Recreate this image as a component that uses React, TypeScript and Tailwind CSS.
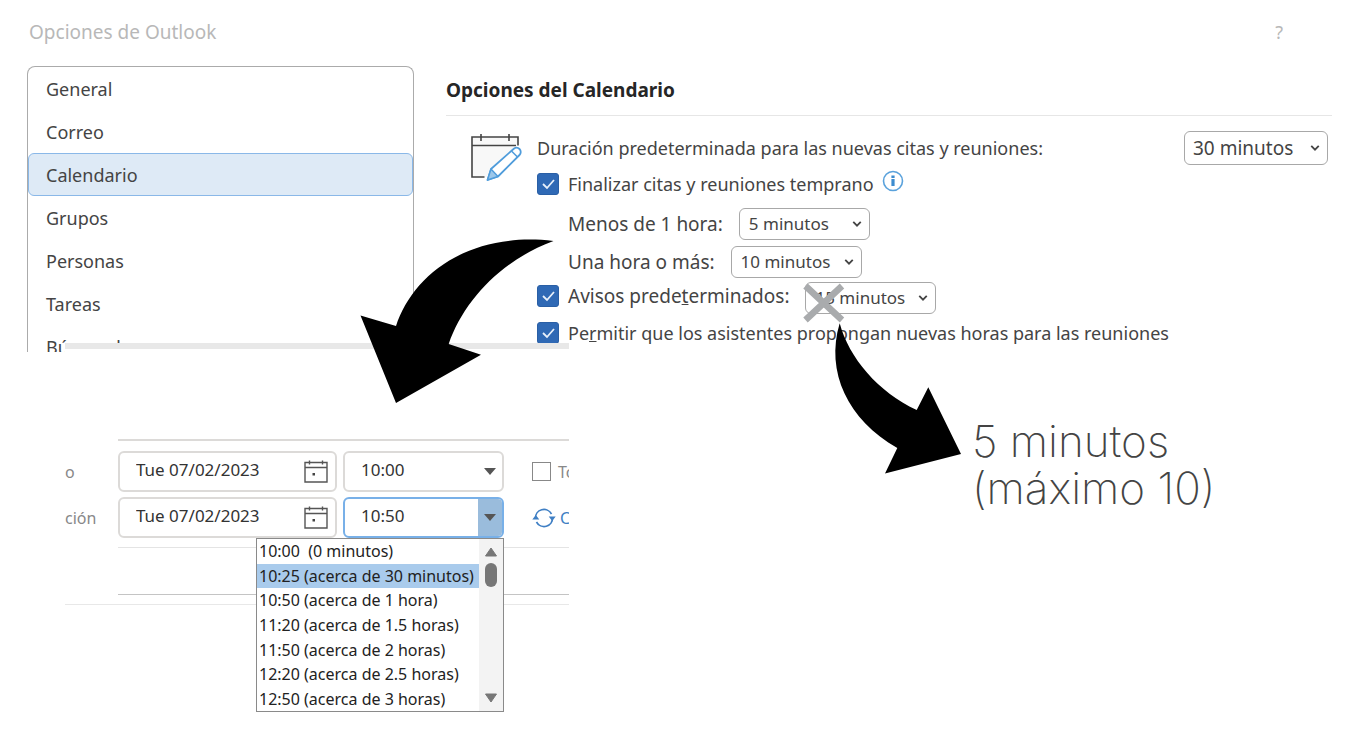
import { ReactNode, useState } from "react";
import clsx from "clsx";

const sections = ["General", "Correo", "Calendario", "Grupos", "Personas", "Tareas", "Búsqueda"];

const endTimes = [
    "10:00  (0 minutos)",
    "10:25 (acerca de 30 minutos)",
    "10:50 (acerca de 1 hora)",
    "11:20 (acerca de 1.5 horas)",
    "11:50 (acerca de 2 horas)",
    "12:20 (acerca de 2.5 horas)",
    "12:50 (acerca de 3 horas)",
];

const CalendarEditIcon = () => (
    <svg viewBox="0 0 52 50" className="w-[52px] h-[50px]" fill="none" aria-hidden="true">
        <path d="M16 44H2V4h46v9L22 38z" fill="#f8f8f8" />
        <path d="M14.500 44H2V4h46v8.500M2 12.500h44M11 1v7M39 1v7" stroke="#444" strokeWidth="1.600" />
        <path d="M17.500 47l3.500-11L43.500 16a4.200 4.200 0 0 1 6 6L28 43.500z" fill="#fff" stroke="#4f9cdb" strokeWidth="1.800" strokeLinejoin="round" />
        <path d="M17.500 47l3.500-11 7 7.500z" fill="#9cc7ea" stroke="#4f9cdb" strokeWidth="1.400" strokeLinejoin="round" />
        <path d="M41.500 18l6 6" stroke="#4f9cdb" strokeWidth="1.500" />
    </svg>
);

const DateIcon = () => (
    <svg viewBox="0 0 24 24" className="w-6 h-6" fill="none" stroke="#555" strokeWidth="1.400" aria-hidden="true">
        <path d="M1 2.500h22V22H1zM1 7.500h22M5.500 .5v4M18.500 .5v4" />
        <rect x="8.500" y="13" width="2.500" height="2.500" fill="#444" stroke="none" />
    </svg>
);

const InfoIcon = () => (
    <svg viewBox="0 0 22 22" className="w-[22px] h-[22px]" fill="none" aria-hidden="true">
        <circle cx="11" cy="11" r="9.500" stroke="#5aa2dc" strokeWidth="1.600" />
        <path d="M11 5.500v2.500M11 9v7" stroke="#3c8ccf" strokeWidth="3.200" />
    </svg>
);

const RecurrenceIcon = () => (
    <svg viewBox="0 0 24 20" className="w-6 h-5" fill="none" stroke="#3f7fc4" strokeWidth="1.700" aria-hidden="true">
        <path d="M3.500 10.500A8.500 8.500 0 0 1 19.500 6M20.500 9.500A8.500 8.500 0 0 1 4.500 14" />
        <path d="M.3 11.500h7l-3.500-4.500zM16.700 8.500h7L20.200 13z" fill="#3f7fc4" stroke="none" />
    </svg>
);

type OptionSelectProps = { id: string; label?: string; value: string; large?: boolean };

const OptionSelect = ({ id, label, value, large }: OptionSelectProps) => (
    <div className="relative shrink-0">
        <select
            id={id}
            aria-label={label}
            className={clsx(
                "block appearance-none rounded-md border border-[#a8a8a8] bg-white text-[#444]",
                large ? "h-[34px] w-36 pl-2 text-[19px] leading-6" : "h-8 w-[131px] pl-[9px] text-[17px] leading-6"
            )}
        >
            <option>{value}</option>
        </select>
        <svg viewBox="0 0 12 8" className="absolute right-2 top-1/2 w-[10px] h-2 -translate-y-1/2 pointer-events-none" fill="none" aria-hidden="true">
            <path d="M1.500 1.500L6 6l4.500-4.500" stroke="#444" strokeWidth="2.200" />
        </svg>
    </div>
);

const OptionCheck = ({ id, children }: { id: string; children: ReactNode }) => (
    <div className="flex items-center gap-[9px]">
        <span className="relative flex">
            <input id={id} type="checkbox" defaultChecked className="peer appearance-none w-[22px] h-[22px] rounded-[3px] border border-[#2a5fa5] bg-white checked:bg-[#2f69b5]" />
            <svg viewBox="0 0 22 22" className="hidden absolute inset-0 pointer-events-none peer-checked:block" fill="none" aria-hidden="true">
                <path d="M6 11l4 4 7-8" stroke="#e8f0fa" strokeWidth="1.800" />
            </svg>
        </span>
        <label htmlFor={id}>{children}</label>
    </div>
);

const DateField = ({ id }: { id: string }) => (
    <div className="flex justify-between items-center pr-[7px] w-[219px] h-[41px] rounded-md border-2 border-[#dcdad8] bg-white">
        <input id={id} defaultValue="Tue 07/02/2023" className="pb-[3px] pl-4 w-40 text-[17px] outline-none text-[#333]" />
        <button type="button" aria-label="Calendario">
            <DateIcon />
        </button>
    </div>
);

const TimeField = ({ label, value, open }: { label: string; value: string; open?: boolean }) => (
    <div className={clsx("flex overflow-hidden w-[161px] h-[41px] rounded-md border-2 bg-white", open ? "border-[#78b0e8]" : "border-[#dcdad8]")}>
        <input aria-label={label} defaultValue={value} className="flex-1 pb-[3px] pl-4 min-w-0 text-[17px] outline-none text-[#333]" />
        <button type="button" aria-label={label} className={clsx("flex justify-center items-center w-6", open && "bg-[#9abcdc]")}>
            <svg viewBox="0 0 12 7" className="w-3 h-[7px]" aria-hidden="true">
                <path d="M0 0h12L6 7z" fill="#555" />
            </svg>
        </button>
    </div>
);

const OptionsPanel = () => {
    const [active, setActive] = useState("Calendario");

    return (
        <div className="flex gap-8 pr-5 pl-[27px]">
            <nav className="flex overflow-hidden flex-col shrink-0 w-[387px] h-[286px] rounded-t-lg border border-b-0 border-[#ababab]">
                {sections.map((section) => (
                    <button
                        key={section}
                        type="button"
                        onClick={() => setActive(section)}
                        className={clsx(
                            "shrink-0 h-[43px] pl-[17px] text-left border rounded-md",
                            section === active ? "border-[#8ab8e8] bg-[#deeaf6]" : "border-transparent"
                        )}
                    >
                        {section}
                    </button>
                ))}
            </nav>

            <section className="flex-1 min-w-0">
                <h2 className="flex items-center pb-[2px] h-[50px] text-[19px] font-bold border-b text-[#262626] border-[#e6e6e6]">Opciones del Calendario</h2>
                <div className="flex gap-[15px] pt-[14px] pl-6">
                    <div className="pt-[3px]">
                        <CalendarEditIcon />
                    </div>
                    <div className="flex-1">
                        <div className="flex justify-between items-center pr-1 h-9">
                            <label htmlFor="duration">Duración predeterminada para las nuevas citas y reuniones:</label>
                            <OptionSelect id="duration" value="30 minutos" large />
                        </div>
                        <div className="flex gap-2 items-center h-9">
                            <OptionCheck id="early">Finalizar citas y reuniones temprano</OptionCheck>
                            <div className="pb-[6px]">
                                <InfoIcon />
                            </div>
                        </div>
                        <div className="flex gap-4 items-center pl-[31px] h-11 text-[19px]">
                            <label htmlFor="short">Menos de 1 hora:</label>
                            <OptionSelect id="short" value="5 minutos" />
                        </div>
                        <div className="flex gap-4 items-center pl-[31px] h-8 text-[19px]">
                            <label htmlFor="long">Una hora o más:</label>
                            <OptionSelect id="long" value="10 minutos" />
                        </div>
                        <div className="flex gap-4 items-center h-9 text-[19px]">
                            <OptionCheck id="reminders">
                                Avisos prede<u>t</u>erminados:
                            </OptionCheck>
                            <div className="pt-1">
                                <OptionSelect id="reminder-time" label="Avisos predeterminados" value="15 minutos" />
                            </div>
                        </div>
                        <div className="flex items-center h-[38px]">
                            <OptionCheck id="propose">
                                Pe<u>r</u>mitir que los asistentes propongan nuevas horas para las reuniones
                            </OptionCheck>
                        </div>
                    </div>
                </div>
            </section>
        </div>
    );
};

const EndTimeList = () => {
    const [selected, setSelected] = useState(1);

    return (
        <div className="flex absolute right-[65px] top-full z-10 w-[248px] h-[174px] bg-white border border-[#8a8a8a]">
            <ul role="listbox" aria-label="Hora de finalización" className="grid flex-1 grid-rows-7 text-base text-[#222]">
                {endTimes.map((time, i) => (
                    <li
                        key={time}
                        role="option"
                        aria-selected={i === selected}
                        onClick={() => setSelected(i)}
                        className={clsx("flex items-center pl-[2px] whitespace-pre", i === selected && "bg-[#a9cbec]")}
                    >
                        {time}
                    </li>
                ))}
            </ul>
            <div className="flex flex-col items-center py-2 w-6 bg-[#f3f3f3]">
                <svg viewBox="0 0 14 10" className="w-[14px] h-[10px]" aria-hidden="true">
                    <path d="M7 1l5.500 8h-11z" fill="#777" stroke="#777" strokeLinejoin="round" />
                </svg>
                <span className="mt-[6px] w-3 h-6 rounded-full bg-[#777]" />
                <svg viewBox="0 0 14 10" className="mt-auto w-[14px] h-[10px]" aria-hidden="true">
                    <path d="M7 9l5.500-8h-11z" fill="#777" stroke="#777" strokeLinejoin="round" />
                </svg>
            </div>
        </div>
    );
};

const AppointmentPanel = () => (
    <div className="relative shrink-0 ml-[65px] w-[504px] bg-white border-t-[6px] border-[#e8e8e8]">
        <div className="pt-[90px] pb-[9px] border-b border-[#e8e8e8]">
            <div className="ml-[53px] border-b-2 border-[#dcdad8]" />
            <div className="flex overflow-hidden items-center mt-[10px] text-base text-[#888]">
                <label htmlFor="start" className="w-[53px]">o</label>
                <DateField id="start" />
                <div className="ml-[6px]">
                    <TimeField label="Hora de inicio" value="10:00" />
                </div>
                <input id="all-day" type="checkbox" className="shrink-0 ml-7 w-[19px] h-[19px] bg-white border appearance-none border-[#888]" />
                <label htmlFor="all-day" className="ml-[7px] w-1 whitespace-nowrap">To</label>
            </div>
            <div className="relative mt-[5px]">
                <div className="flex overflow-hidden items-center text-base text-[#888]">
                    <label htmlFor="end" className="w-[53px]">ción</label>
                    <DateField id="end" />
                    <div className="ml-[6px]">
                        <TimeField label="Hora de finalización" value="10:50" open />
                    </div>
                    <button type="button" className="flex gap-1 items-center ml-7 w-1 text-[#3f7fc4]">
                        <span className="shrink-0"><RecurrenceIcon /></span>
                        C
                    </button>
                </div>
                <EndTimeList />
            </div>
            <div className="ml-[53px] mt-[9px] h-12 border-t border-b border-t-[#e4e4e4] border-b-[#c4c4c4]" />
        </div>
    </div>
);

const Annotations = () => (
    <>
        <svg viewBox="360 238 194 166" className="absolute left-[360px] top-[238px] z-20 w-[194px] h-[166px] pointer-events-none" aria-hidden="true">
            <path d="M553.500 241C466 231 412 277 396 326L360.500 315.500 396 403 481 354.700 448.700 344C464 300 502 260 553.500 241z" />
        </svg>
        <svg viewBox="800 280 164 196" className="absolute left-[800px] top-[280px] z-20 w-[164px] h-[196px] pointer-events-none" aria-hidden="true">
            <path d="M805.500 286l36.500 34M842 286l-36.500 34" stroke="#a9abad" strokeWidth="6.500" />
            <path d="M839.700 323.300C849 358 878 392 916.700 410L928.300 387.300 961 454 885 473.500 897.300 448C848 420 825 372 839.700 323.300z" />
        </svg>
    </>
);

const App = (): JSX.Element => {
    return (
        <main className="overflow-hidden relative w-full min-h-screen bg-white font-['Noto_Sans','Open_Sans',sans-serif] text-lg leading-6 text-[#444]">
            <header className="flex justify-between items-center pr-[69px] pb-[2px] pl-[29px] h-[66px] text-[#b8b8b8]">
                <h1 className="text-[19px]">Opciones de Outlook</h1>
                <button type="button" aria-label="Ayuda">?</button>
            </header>
            <OptionsPanel />
            <div className="flex items-start -mt-[9px]">
                <AppointmentPanel />
                <p className="pl-[403px] pt-[75px] font-['Inter',sans-serif] font-extralight text-[44px] leading-[47px] text-[#444] whitespace-nowrap">
                    5 minutos
                    <br />
                    (máximo 10)
                </p>
            </div>
            <Annotations />
        </main>
    );
};

export default App;
